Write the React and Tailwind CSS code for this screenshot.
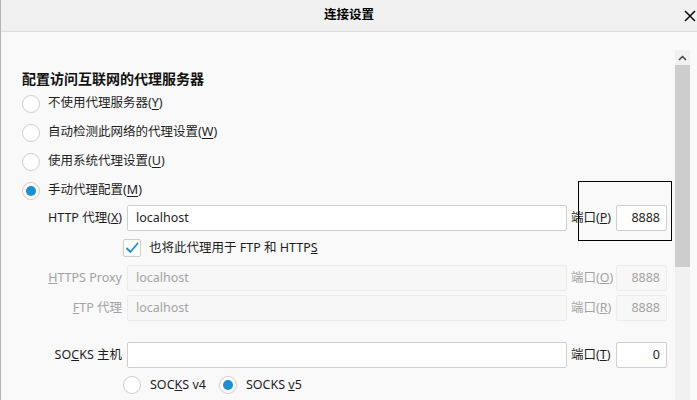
import React from 'react';

function Radio({ checked }) {
  return (
    <span
      className={
        'flex h-[18px] w-[18px] shrink-0 items-center justify-center rounded-full border bg-white ' +
        (checked ? 'border-[#d9c9d0]' : 'border-[#cfcfcf]')
      }
    >
      {checked ? <span className="h-[10px] w-[10px] rounded-full bg-[#1b8fd6]" /> : null}
    </span>
  );
}

function Check() {
  return (
    <span className="flex h-[18px] w-[18px] shrink-0 items-center justify-center rounded-[2px] border border-[#cccccc] bg-white">
      <svg width="14" height="14" viewBox="0 0 14 14" fill="none">
        <path d="M2 7.5 L5.5 11 L12.5 2.5" stroke="#1b8fd6" strokeWidth="1.8" strokeLinecap="round" strokeLinejoin="round" />
      </svg>
    </span>
  );
}

function Field({ value, disabled, right, className = '' }) {
  return (
    <div
      className={
        'flex h-[26px] items-center rounded-[2px] border ' +
        (disabled ? 'border-[#ececec] bg-[#f7f7f7] text-[#a3a3a3] ' : 'border-[#cfcfcf] bg-white text-[#1e1e1e] ') +
        (right ? 'justify-end pr-[6px] ' : 'pl-[8px] ') +
        className
      }
    >
      {value}
    </div>
  );
}

function ProxyRow({ label, value, portLabel, port, disabled, mt = '' }) {
  return (
    <div className={'flex h-[26px] items-center ' + mt}>
      <div className={'w-[101px] pr-[1px] text-right ' + (disabled ? 'text-[#a3a3a3]' : 'text-[#1e1e1e]')}>{label}</div>
      <Field value={value} disabled={disabled} className="ml-[4px] w-[440px]" />
      <div className={'ml-[4px] w-[44px] ' + (disabled ? 'text-[#a3a3a3]' : 'text-[#1e1e1e]')}>{portLabel}</div>
      <Field value={port} disabled={disabled} right className="ml-[1px] w-[51px]" />
    </div>
  );
}

const options = [
  { text: '不使用代理服务器', key: 'Y' },
  { text: '自动检测此网络的代理设置', key: 'W' },
  { text: '使用系统代理设置', key: 'U' },
  { text: '手动代理配置', key: 'M', checked: true },
];

export default function App() {
  return (
    <div className="relative flex h-[400px] w-[697px] flex-col overflow-hidden border-l border-[#b4b4b4] bg-[#f9f9f9] font-['Noto_Sans','Noto_Sans_CJK_SC',sans-serif] text-[12.5px] text-[#1e1e1e]">
      <div className="relative flex h-[32px] shrink-0 items-center justify-center border-b border-[#dcdcdc] bg-[#f0f0f0]">
        <span className="text-[12.5px] font-bold text-black">连接设置</span>
        <svg className="absolute right-[1px] top-[10px]" width="12" height="12" viewBox="0 0 12 12">
          <path d="M1 1 L11 11 M11 1 L1 11" stroke="#111" strokeWidth="1.6" />
        </svg>
      </div>

      <div className="flex flex-1">
        <div className="flex-1 pl-[21px] pt-[36px]">
          <div className="flex h-[21px] items-center text-[14px] font-bold text-[#111]">配置访问互联网的代理服务器</div>
          {options.map((o) => (
            <div key={o.key} className="flex h-[29px] items-center gap-[8px]">
              <Radio checked={o.checked} />
              <span>
                {o.text}(<u className="underline-offset-2">{o.key}</u>)
              </span>
            </div>
          ))}

          <ProxyRow
            label={<>HTTP 代理(<u>X</u>)</>}
            value="localhost"
            portLabel={<>端口(<u>P</u>)</>}
            port="8888"
          />

          <div className="ml-[101px] flex h-[34px] items-center gap-[8px]">
            <Check />
            <span>
              也将此代理用于 FTP 和 HTTP<u>S</u>
            </span>
          </div>

          <ProxyRow
            label={<><u>H</u>TTPS Proxy</>}
            value="localhost"
            portLabel={<>端口(<u>O</u>)</>}
            port="8888"
            disabled
          />
          <ProxyRow
            label={<><u>F</u>TP 代理</>}
            value="localhost"
            portLabel={<>端口(<u>R</u>)</>}
            port="8888"
            disabled
            mt="mt-[4px]"
          />
          <ProxyRow
            label={<>SO<u>C</u>KS 主机</>}
            value=""
            portLabel={<>端口(<u>T</u>)</>}
            port="0"
            mt="mt-[21px]"
          />

          <div className="ml-[101px] mt-[3px] flex h-[28px] items-center">
            <Radio />
            <span className="ml-[9px]">
              SOC<u>K</u>S v4
            </span>
            <span className="ml-[13px]">
              <Radio checked />
            </span>
            <span className="ml-[9px]">
              SOCKS <u>v</u>5
            </span>
          </div>
        </div>

        <div className="mr-[7px] mt-[18px] flex w-[15px] flex-col bg-[#f1f1f1]">
          <div className="flex h-[15px] items-center justify-center">
            <svg width="9" height="6" viewBox="0 0 9 6">
              <path d="M1 5 L4.5 1.5 L8 5" stroke="#444" strokeWidth="1.5" fill="none" />
            </svg>
          </div>
          <div className="h-[202px] bg-[#cdcdcd]" />
        </div>
      </div>

      <div className="absolute left-[577px] top-[181px] h-[60px] w-[94px] border-[1.5px] border-black" />
    </div>
  );
}
